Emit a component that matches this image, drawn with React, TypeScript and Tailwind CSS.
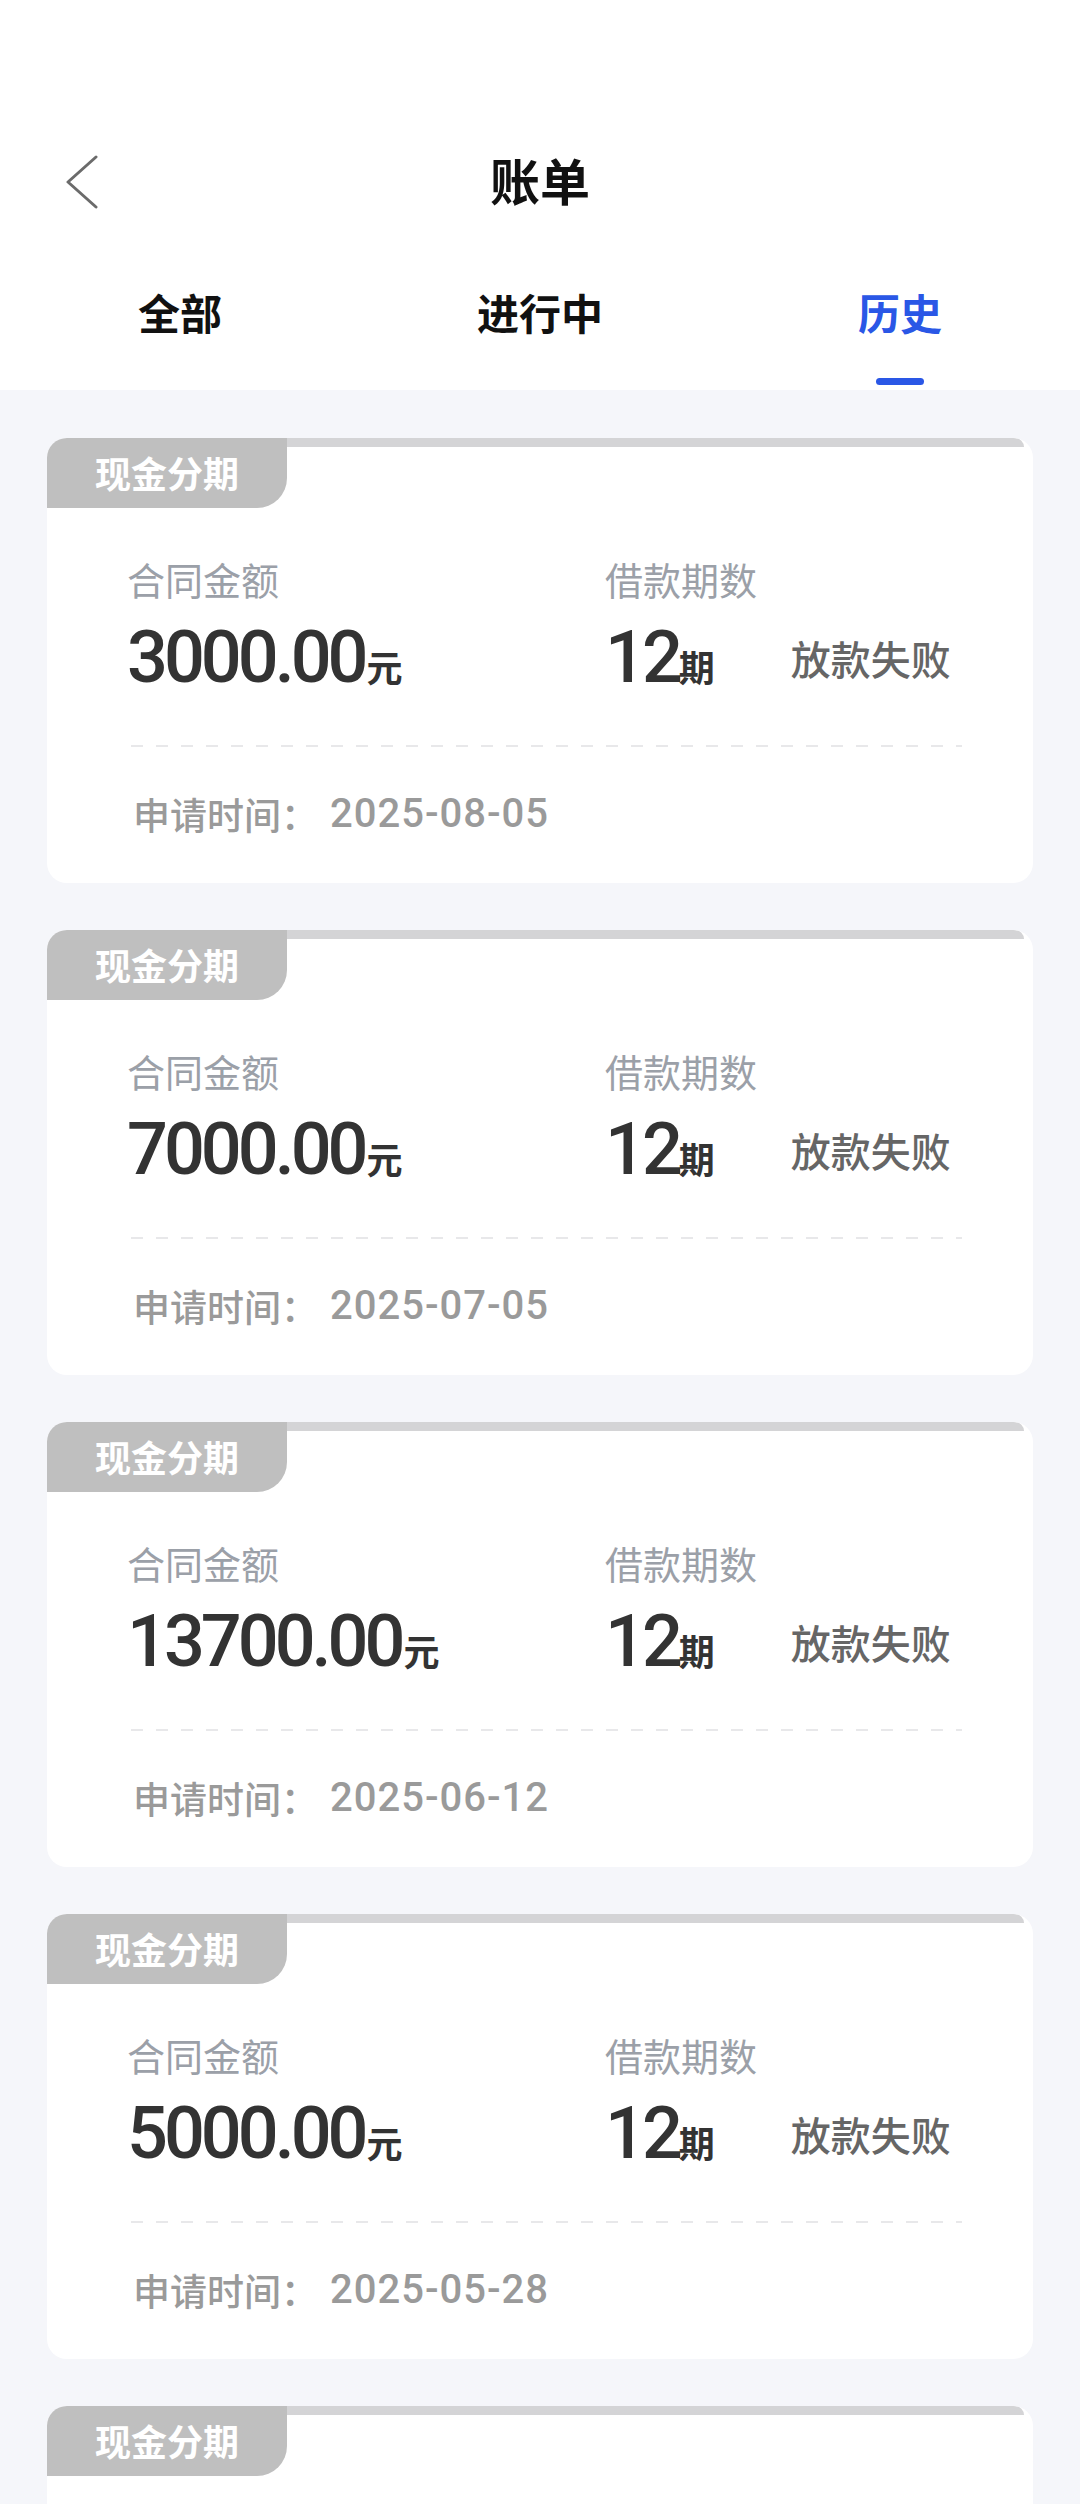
import { useState } from "react";

const bills = [
  { amount: "3000.00", periods: 12, status: "放款失败", date: "2025-08-05" },
  { amount: "7000.00", periods: 12, status: "放款失败", date: "2025-07-05" },
  { amount: "13700.00", periods: 12, status: "放款失败", date: "2025-06-12" },
  { amount: "5000.00", periods: 12, status: "放款失败", date: "2025-05-28" },
  { amount: "5000.00", periods: 12, status: "放款失败", date: "2025-05-01" },
];

const tabs = ["全部", "进行中", "历史"];

const cjk = "font-['Noto_Sans_CJK_SC',sans-serif]";
const num = "font-['Roboto','Noto_Sans_CJK_SC',sans-serif]";

const BillCard = ({ bill }: { bill: (typeof bills)[number] }) => (
  <div className="h-[445px] shrink-0 rounded-[20px] bg-white overflow-hidden">
    <div className="flex items-start">
      <div className="w-[240px] h-[70px] bg-[#bfbfbf] rounded-br-[30px] flex items-center justify-center">
        <span className={`${cjk} text-[36px] leading-none font-bold text-white mb-[3px]`}>现金分期</span>
      </div>
      <div className="flex-1 h-[9px] bg-[#d4d4d6] mr-[9px] rounded-tr-[12px]" />
    </div>

    <div className="flex pl-[80px] pt-[52px]">
      <div className="w-[478px]">
        <div className={`${cjk} text-[38px] leading-none text-[#9ba0a8]`}>合同金额</div>
        <div className="flex items-baseline mt-[24px] text-[#333333]">
          <span className={`${num} text-[72px] leading-none font-medium tracking-[-4px]`}>{bill.amount}</span>
          <span className={`${cjk} text-[36px] leading-none font-bold ml-[2px]`}>元</span>
        </div>
      </div>
      <div>
        <div className={`${cjk} text-[38px] leading-none text-[#9ba0a8]`}>借款期数</div>
        <div className="flex items-center mt-[24px]">
          <div className="flex items-baseline text-[#333333]">
            <span className={`${num} text-[72px] leading-none font-medium tracking-[-4px]`}>{bill.periods}</span>
            <span className={`${cjk} text-[36px] leading-none font-bold`}>期</span>
          </div>
          <span className={`${cjk} text-[40px] leading-none font-medium text-[#666666] ml-[76px]`}>{bill.status}</span>
        </div>
      </div>
    </div>

    <div className="ml-[84px] mr-[71px] mt-[51px] h-[2px] bg-[linear-gradient(to_right,#e8e8ea_50%,transparent_50%)] bg-[length:25px_2px]" />

    <div className="flex items-center pl-[86px] mt-[47px] text-[#9a9a9a]">
      <span className={`${cjk} text-[37px] leading-none font-medium`}>申请时间：</span>
      <span className={`${num} text-[40px] leading-none font-medium tracking-[1px] ml-[12px]`}>{bill.date}</span>
    </div>
  </div>
);

export default function App() {
  const [active, setActive] = useState(2);

  return (
    <div className="w-[1080px] h-[2504px] overflow-hidden bg-[#f5f6fa]">
      <div className="bg-white pt-[156px]">
        <div className="flex items-center h-[52px]">
          <div className="w-[360px] pl-[66px]">
            <svg width="32" height="54" viewBox="0 0 32 54" fill="none">
              <path d="M30 2 L2 27 L30 52" stroke="#6b6b6b" strokeWidth="3" strokeLinecap="round" strokeLinejoin="round" />
            </svg>
          </div>
          <div className={`w-[360px] text-center ${cjk} text-[50px] leading-none font-bold text-[#111111] mb-[6px]`}>账单</div>
          <div className="w-[360px]" />
        </div>

        <div className="grid grid-cols-3 pt-[83px]">
          {tabs.map((t, i) => (
            <button key={t} onClick={() => setActive(i)} className="flex flex-col items-center pb-[5px]">
              <span
                className={`${cjk} text-[42px] leading-none font-bold ${i === active ? "text-[#2a57e6]" : "text-[#111111]"}`}
              >
                {t}
              </span>
              <span className={`mt-[45px] w-[48px] h-[7px] rounded-full ${i === active ? "bg-[#2a57e6]" : "bg-transparent"}`} />
            </button>
          ))}
        </div>
      </div>

      <div className="flex flex-col gap-[47px] px-[47px] pt-[48px]">
        {bills.map((b, i) => (
          <BillCard key={i} bill={b} />
        ))}
      </div>
    </div>
  );
}
